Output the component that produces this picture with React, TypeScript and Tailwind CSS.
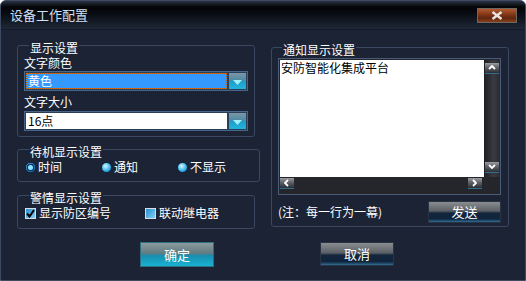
import { ReactNode } from "react";

const Legend = ({ children, ml = "ml-[5px]" }: { children: ReactNode; ml?: string }) => (
  <legend className={`${ml} px-[1px] pt-[6px] leading-[12px] text-white`}>{children}</legend>
);

const DropButton = () => (
  <div className="w-[18px] h-full flex flex-col border-l border-[#2b4058] bg-[linear-gradient(to_bottom,#7b97a6_0%,#4f8aa6_45%,#1c9fcb_55%,#24b3dc_100%)]">
    <div className="flex-1 flex items-end justify-center pb-[4px]">
      <svg width="9" height="5" viewBox="0 0 9 5">
        <polygon points="0,0 9,0 4.5,5" fill="#9ff0ff" />
      </svg>
    </div>
  </div>
);

const Combo = ({ value, active }: { value: string; active?: boolean }) => (
  <div className="h-[20px] flex border border-[#46678a] bg-[#2a3f57] p-[1px]">
    {active ? (
      <div className="flex-1 mr-[1px] bg-[#3399ff] border border-dotted border-[#c05a00] flex items-center pl-[1px] text-white">
        {value}
      </div>
    ) : (
      <div className="flex-1 mr-[1px] bg-white flex items-center pl-[2px] text-black">{value}</div>
    )}
    <DropButton />
  </div>
);

const Radio = ({ label, checked }: { label: string; checked?: boolean }) => (
  <div className="w-[76px] flex items-center gap-[2px]">
    <span className="w-[11px] h-[11px] rounded-full border border-[#0b2a46] bg-[radial-gradient(circle_at_40%_35%,#d8f6ff,#3cb6ea_55%,#1670b0)] flex items-center justify-center">
      {checked && <span className="w-[5px] h-[5px] rounded-full bg-[#8fe4ff] ring-[1.5px] ring-[#0a3a78]" />}
    </span>
    <span>{label}</span>
  </div>
);

const Check = ({ label, checked, w }: { label: string; checked?: boolean; w: string }) => (
  <div className={`${w} flex items-center gap-[2px]`}>
    <span className="w-[11px] h-[11px] border border-[#d8dde4] bg-[linear-gradient(135deg,#2a90d0,#7fd0f4)] flex items-center justify-center">
      {checked && (
        <svg width="9" height="9" viewBox="0 0 9 9">
          <path d="M1 4.5 L3.5 7.5 L8 1" stroke="#000" strokeWidth="2" fill="none" />
        </svg>
      )}
    </span>
    <span className="ml-[1px]">{label}</span>
  </div>
);

const ScrollBtn = ({ dir, className = "" }: { dir: "up" | "down" | "left" | "right"; className?: string }) => {
  const pts = {
    up: "1,5 4,2 7,5",
    down: "1,2 4,5 7,2",
    left: "5,1 2,4 5,7",
    right: "2,1 5,4 2,7",
  }[dir];
  return (
    <div
      className={`w-[14px] h-[11px] flex items-center justify-center border-b border-[#2f6e90] bg-[linear-gradient(to_bottom,#9a9ca0_0%,#5e6166_45%,#2a2d33_100%)] ${className}`}
    >
      <svg width="8" height="8" viewBox="0 0 8 8">
        <polyline points={pts} stroke="#fff" strokeWidth="1.8" fill="none" />
      </svg>
    </div>
  );
};

const GlossButton = ({ children, teal, size }: { children: ReactNode; teal?: boolean; size: string }) => (
  <button
    className={`${size} flex items-center justify-center text-white text-[13px] border ${
      teal
        ? "border-[#2c6f83] bg-[linear-gradient(to_bottom,#8c9a9c_0%,#607c82_45%,#178fae_55%,#1ab2d2_100%)]"
        : "border-[#283444] bg-[linear-gradient(to_bottom,#8a8d90_0%,#5b6066_45%,#13263c_55%,#10243c_85%,#2f6f96_100%)]"
    }`}
  >
    {children}
  </button>
);

export default function App() {
  return (
    <div className="w-[526px] h-[281px] overflow-hidden rounded-t-[6px] border border-[#3d4a62] bg-[#1b2335] flex flex-col text-[12px] leading-[14px] text-white font-['Noto_Sans_CJK_SC','Liberation_Sans',sans-serif]">
      <div className="h-[29px] shrink-0 flex items-center justify-between pl-[9px] pr-[8px] bg-[linear-gradient(to_bottom,#2c3444_0px,#030406_6px,#080b11_12px,#1f2839_28px)] border-b border-[#141a27]">
        <span className="text-[13px] text-[#cfe0f5]">设备工作配置</span>
        <button className="w-[40px] h-[15px] flex items-center justify-center border border-[#6e6660] bg-[linear-gradient(to_bottom,#b0582e_0%,#7a3214_50%,#5e260e_70%,#8a401c_100%)]">
          <svg width="12" height="9" viewBox="0 0 12 9">
            <path d="M1.5 1 L10.5 8 M10.5 1 L1.5 8" stroke="#e8e4e0" strokeWidth="2.4" />
          </svg>
        </button>
      </div>

      <div className="flex-1 flex flex-col px-[16px]">
        <div className="flex gap-[16px]">
          <div className="w-[238px] flex flex-col">
            <fieldset className="mt-[6px] border border-[#3a4862] rounded-[3px] px-[6px] pb-[5px]">
              <Legend>显示设置</Legend>
              <div className="mt-[2px]">文字颜色</div>
              <div className="mt-[1px]">
                <Combo value="黄色" active />
              </div>
              <div className="mt-[4px]">文字大小</div>
              <div className="mt-[2px]">
                <Combo value="16点" />
              </div>
            </fieldset>

            <fieldset className="mt-[3px] border border-[#3a4862] rounded-[3px] px-[6px] pb-[7px]">
              <Legend>待机显示设置</Legend>
              <div className="mt-[2px] flex pl-[1px]">
                <Radio label="时间" checked />
                <Radio label="通知" />
                <Radio label="不显示" />
              </div>
            </fieldset>

            <fieldset className="mt-[4px] border border-[#3a4862] rounded-[3px] px-[6px] pb-[8px]">
              <Legend>警情显示设置</Legend>
              <div className="mt-[2px] flex pl-[1px]">
                <Check label="显示防区编号" checked w="w-[120px]" />
                <Check label="联动继电器" w="w-[100px]" />
              </div>
            </fieldset>
          </div>

          <div className="w-[238px]">
            <fieldset className="mt-[8px] border border-[#3a4862] rounded-[3px] pl-[6px] pr-[7px] pb-[3px]">
              <Legend ml="ml-[4px]">通知显示设置</Legend>
              <div className="mt-[2px] border border-[#4a5b78] bg-[#25262c]">
                <div className="flex pl-[1px] pt-[1px]">
                  <div className="flex-1 h-[117px] bg-white text-black pl-[1px] pt-[1px]">安防智能化集成平台</div>
                  <div className="w-[16px] h-[117px] flex flex-col items-center justify-between py-[2px] bg-[linear-gradient(to_right,#1e1f24,#3a3b42_60%,#2a2b30)]">
                    <ScrollBtn dir="up" className="mt-[1px]" />
                    <ScrollBtn dir="down" className="mb-[2px]" />
                  </div>
                </div>
                <div className="h-[17px] flex items-start pt-[1px] pl-[1px] pr-[18px] justify-between">
                  <ScrollBtn dir="left" />
                  <ScrollBtn dir="right" />
                </div>
              </div>
              <div className="mt-[6px] flex items-center justify-between">
                <span>(注：每一行为一幕)</span>
                <GlossButton size="w-[73px] h-[22px]">发送</GlossButton>
              </div>
            </fieldset>
          </div>
        </div>

        <div className="mt-[13px] flex pl-[123px] gap-[106px]">
          <GlossButton teal size="w-[74px] h-[25px]">确定</GlossButton>
          <GlossButton size="w-[74px] h-[24px]">取消</GlossButton>
        </div>
      </div>
    </div>
  );
}
